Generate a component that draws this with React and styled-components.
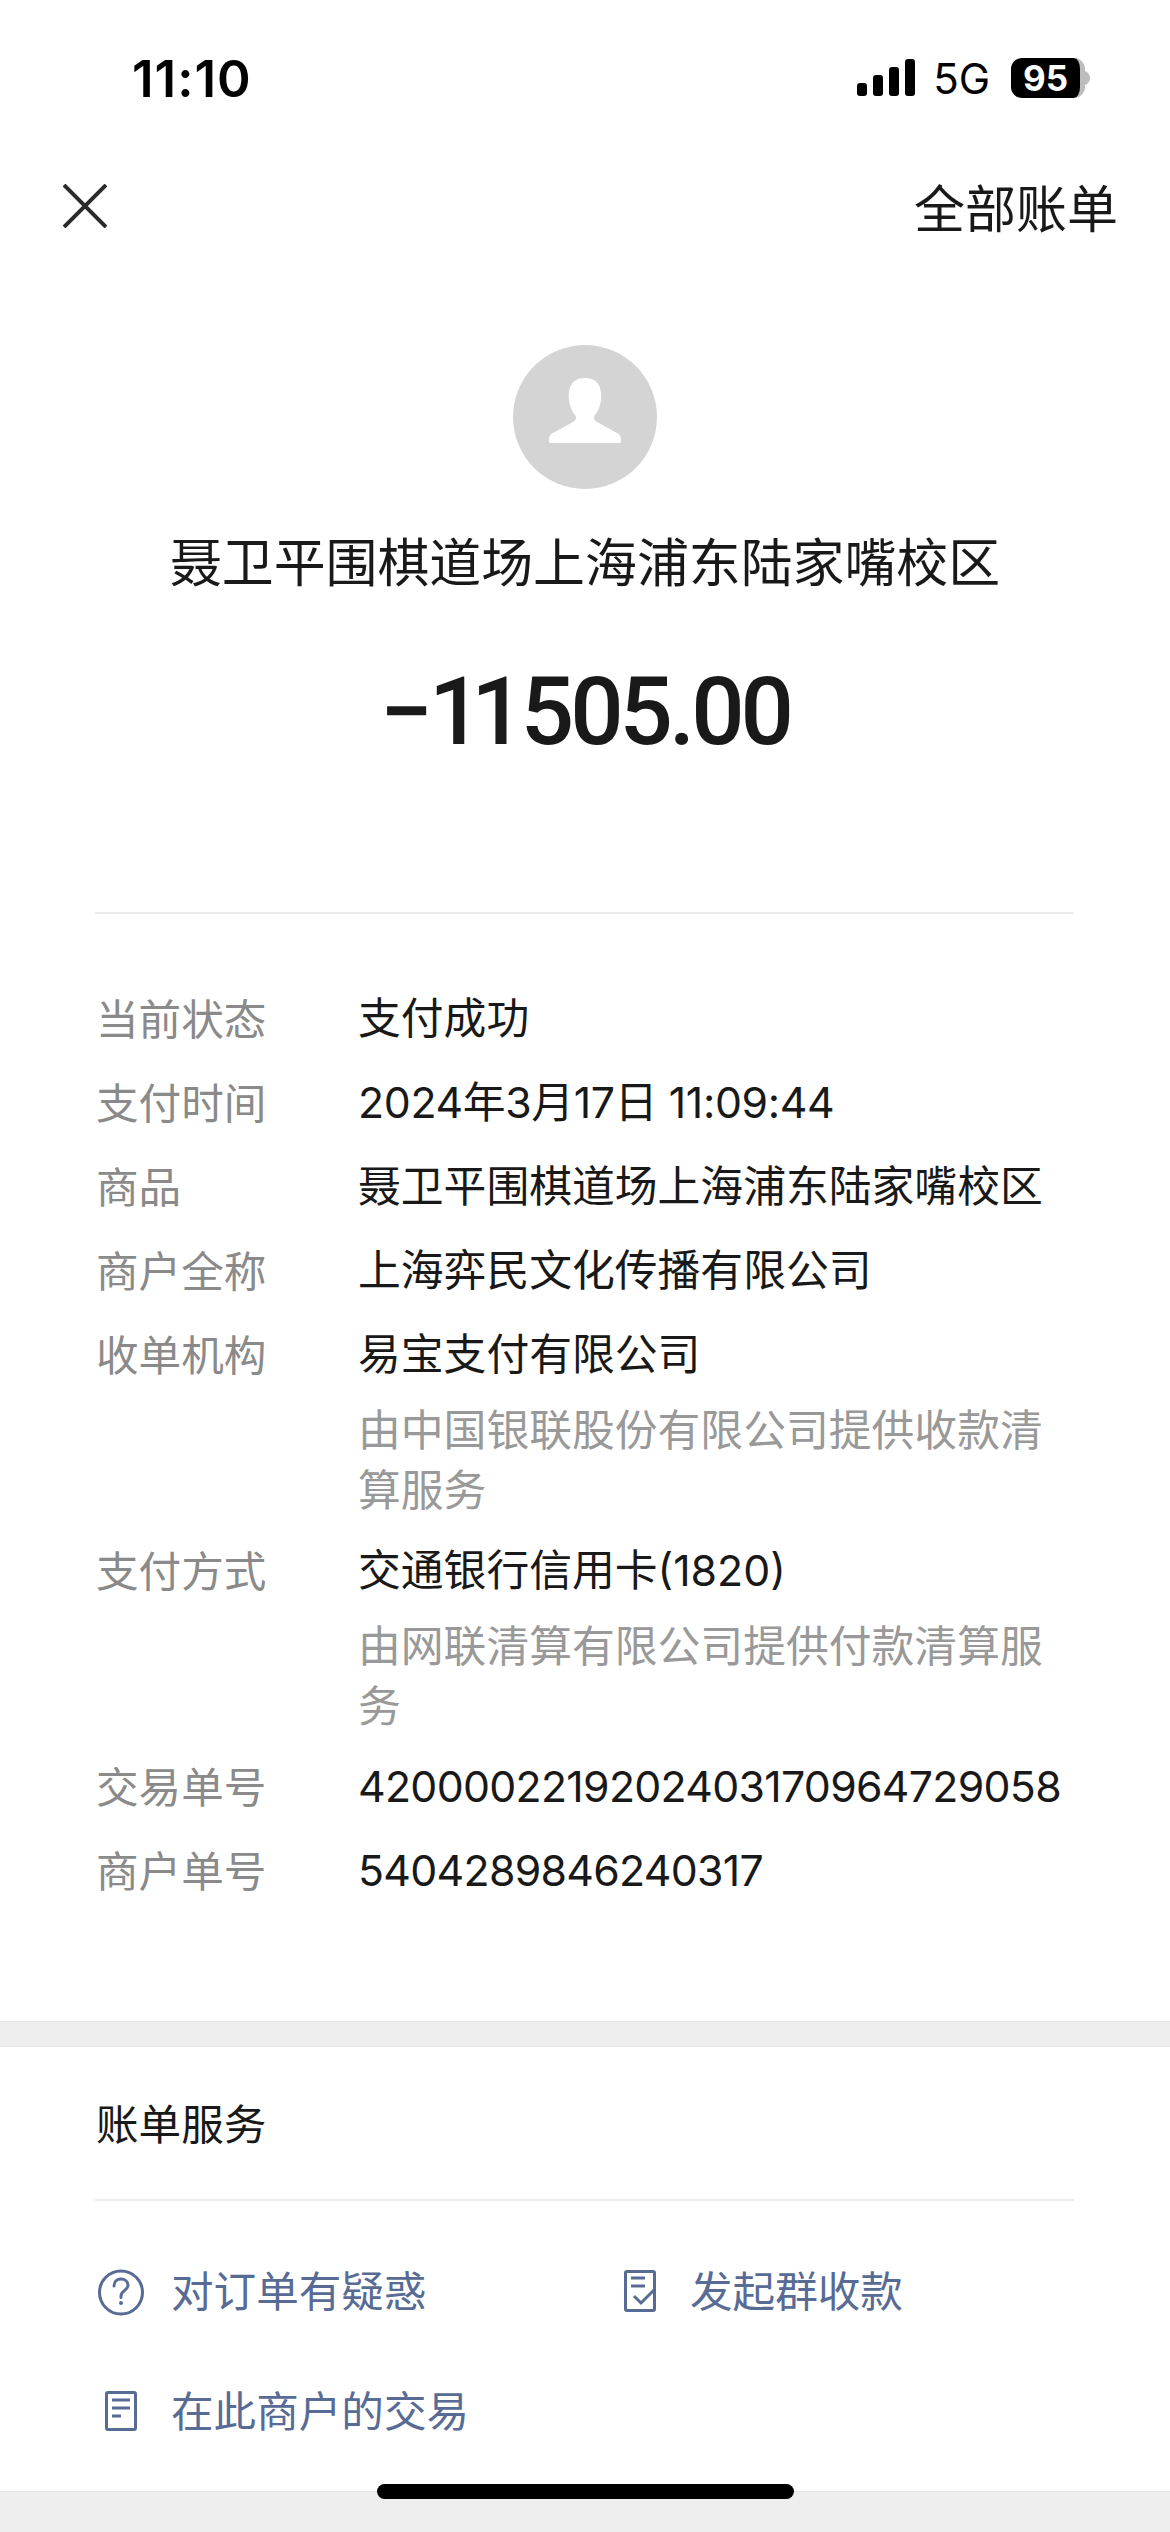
import React from "react";
import styled, { createGlobalStyle } from "styled-components";

const GlobalStyle = createGlobalStyle`
  html, body {
    margin: 0;
    padding: 0;
    background: #ffffff;
  }
`;

const Page = styled.div`
  position: relative;
  width: 1170px;
  height: 2532px;
  overflow: hidden;
  display: flex;
  flex-direction: column;
  background: #ffffff;
  font-family: "Noto Sans CJK SC", "Liberation Sans", sans-serif;
  color: #191919;
`;

const StatusBar = styled.div`
  height: 156px;
  flex: none;
  display: flex;
  align-items: center;
  justify-content: space-between;
  padding: 0 80px 0 132px;
`;

const Clock = styled.span`
  font-family: Inter, "Liberation Sans", sans-serif;
  font-size: 51px;
  font-weight: 600;
  letter-spacing: 1px;
  color: #000000;
`;

const StatusIcons = styled.div`
  display: flex;
  align-items: center;
`;

const Network = styled.span`
  font-family: Inter, "Liberation Sans", sans-serif;
  font-size: 42px;
  font-weight: 400;
  margin: 0 21px 0 18px;
  color: #000000;
`;

const Battery = styled.div`
  width: 74px;
  height: 40px;
  background: #000000;
  border-radius: 11px;
  border-right: 5px solid #bdbdbd;
  box-sizing: border-box;
  display: flex;
  align-items: center;
  justify-content: center;
  color: #ffffff;
  font-family: Inter, "Liberation Sans", sans-serif;
  font-size: 35px;
  font-weight: 700;
`;

const NavBar = styled.div`
  height: 100px;
  flex: none;
  display: flex;
  align-items: center;
  justify-content: space-between;
  padding: 0 52px 0 63px;
`;

const NavLink = styled.span`
  font-size: 51px;
  line-height: 60px;
  color: #191919;
`;

const Hero = styled.div`
  display: flex;
  flex-direction: column;
  align-items: center;
  flex: none;
  padding: 89px 0 145px;
`;

const MerchantName = styled.div`
  margin-top: 40px;
  font-size: 51.9px;
  line-height: 62px;
  color: #191919;
`;

const Amount = styled.div`
  margin-top: 66px;
  font-family: Roboto, "Liberation Sans", sans-serif;
  font-size: 94px;
  line-height: 110px;
  font-weight: 500;
  letter-spacing: -4px;
  color: #191919;
`;

// the reference's numeral 1 is much narrower than Roboto's tabular one
const Ones = styled.span`
  letter-spacing: -11px;
  margin-right: 7px;
`;

const Divider = styled.div`
  height: 2px;
  flex: none;
  margin: 0 96px 0 95px;
  background: #ececec;
`;

const Details = styled.div`
  flex: none;
  display: flex;
  flex-direction: column;
  padding: 73px 0 98px 96px;
`;

const Row = styled.div`
  display: grid;
  grid-template-columns: 262px 1fr;
  padding-bottom: 22px;
`;

const Label = styled.div`
  font-size: 42.6px;
  line-height: 60px;
  color: #8a8a8a;
`;

const Value = styled.div`
  padding-top: 2px;
  font-family: Inter, "Noto Sans CJK SC", sans-serif;
  font-size: 42.8px;
  line-height: 60px;
  letter-spacing: ${(props) => props.$tracking || "0"};
  color: #191919;
  white-space: nowrap;
`;

const Note = styled.div`
  width: 690px;
  margin-top: 12px;
  font-size: 42.8px;
  line-height: 60px;
  color: #999999;
`;

const GrayBand = styled.div`
  height: 24px;
  flex: none;
  background: #eeeeee;
  border-top: 1px solid #e5e5e5;
  border-bottom: 1px solid #e5e5e5;
`;

const Services = styled.div`
  flex: 1;
  display: flex;
  flex-direction: column;
`;

const ServicesTitle = styled.div`
  height: 148px;
  flex: none;
  padding: 0 0 4px 96px;
  display: flex;
  align-items: center;
  font-size: 42.6px;
  color: #191919;
`;

const Actions = styled.div`
  display: grid;
  grid-template-columns: 519px 1fr;
  grid-auto-rows: 120px;
  padding: 27px 0 0 97px;
`;

const Action = styled.div`
  display: flex;
  align-items: center;
  gap: 26px;
  font-size: 42.6px;
  color: #576b95;
`;

const ActionIcon = styled.svg`
  width: 48px;
  height: 60px;
  flex: none;
`;

const FooterBand = styled.div`
  height: 40px;
  flex: none;
  background: #eeeeee;
  border-top: 1px solid #e5e5e5;
`;

const HomeIndicator = styled.div`
  position: absolute;
  left: 377px;
  bottom: 33px;
  width: 417px;
  height: 15px;
  border-radius: 8px;
  background: #000000;
`;

const rows = [
  { label: "当前状态", value: "支付成功" },
  { label: "支付时间", value: "2024年3月17日 11:09:44", tracking: "-0.35px" },
  { label: "商品", value: "聂卫平围棋道场上海浦东陆家嘴校区" },
  { label: "商户全称", value: "上海弈民文化传播有限公司" },
  { label: "收单机构", value: "易宝支付有限公司", note: "由中国银联股份有限公司提供收款清算服务" },
  { label: "支付方式", value: "交通银行信用卡(1820)", note: "由网联清算有限公司提供付款清算服务" },
  { label: "交易单号", value: "4200002219202403170964729058", tracking: "-0.7px" },
  { label: "商户单号", value: "5404289846240317", tracking: "-0.7px" },
];

const SignalIcon = () => (
  <svg width="58" height="38" viewBox="0 0 58 38" fill="#000">
    <rect x="0" y="24" width="10" height="13" rx="3" />
    <rect x="16" y="16" width="10" height="21" rx="3" />
    <rect x="32" y="8" width="10" height="29" rx="3" />
    <rect x="48" y="0" width="10" height="37" rx="3" />
  </svg>
);

const BatteryNub = () => (
  <svg width="5" height="14" viewBox="0 0 5 14" fill="#bdbdbd">
    <path d="M0 0c3 1 5 4 5 7s-2 6-5 7z" />
  </svg>
);

const CloseIcon = () => (
  <svg width="44" height="44" viewBox="0 0 44 44" fill="none" stroke="#2b2b2b" strokeWidth="4">
    <path d="M1 1l42 42M43 1L1 43" />
  </svg>
);

const Avatar = () => (
  <svg width="144" height="144" viewBox="0 0 144 144">
    <circle cx="72" cy="72" r="72" fill="#d4d4d4" />
    <path
      d="M72 33c-14 0-17 11-16 21 .5 7 3 12 6 16 2 3 1 5-2 7l-20 11c-4 2-4 5-4 8 0 2 1 2 3 2h66c2 0 3 0 3-2 0-3 0-6-4-8L84 77c-3-2-4-4-2-7 3-4 5.500-9 6-16 1-10-2-21-16-21z"
      fill="#ffffff"
    />
  </svg>
);

const HelpIcon = () => (
  <ActionIcon viewBox="0 0 48 60" fill="none" stroke="#576b95" strokeWidth="3">
    <circle cx="24" cy="34.500" r="21.500" />
    <path d="M17 28c0-4.200 3-7 7-7s7 2.700 7 6.300c0 5-7 5.200-7 10.700v1.500" strokeLinecap="round" />
    <circle cx="24" cy="45" r="2" fill="#576b95" stroke="none" />
  </ActionIcon>
);

const CheckDocIcon = () => (
  <ActionIcon viewBox="0 0 48 60" fill="none" stroke="#576b95" strokeWidth="3">
    <rect x="9.500" y="13.500" width="29" height="39" rx="1.500" />
    <path d="M15 20h14M15 28h14" />
    <path d="M18 38l7 7 13-13" />
  </ActionIcon>
);

const DocIcon = () => (
  <ActionIcon viewBox="0 0 48 60" fill="none" stroke="#576b95" strokeWidth="3">
    <rect x="9.500" y="14.500" width="29" height="37" rx="1.500" />
    <path d="M15 22h18M15 30h18M15 38h9" />
  </ActionIcon>
);

export default function App() {
  return (
    <Page>
      <GlobalStyle />
      <StatusBar>
        <Clock>11:10</Clock>
        <StatusIcons>
          <SignalIcon />
          <Network>5G</Network>
          <Battery>95</Battery>
          <BatteryNub />
        </StatusIcons>
      </StatusBar>
      <NavBar>
        <CloseIcon />
        <NavLink>全部账单</NavLink>
      </NavBar>
      <Hero>
        <Avatar />
        <MerchantName>聂卫平围棋道场上海浦东陆家嘴校区</MerchantName>
        <Amount>−<Ones>11</Ones>505.00</Amount>
      </Hero>
      <Divider />
      <Details>
        {rows.map((row) => (
          <Row key={row.label}>
            <Label>{row.label}</Label>
            <div>
              <Value $tracking={row.tracking}>{row.value}</Value>
              {row.note && <Note>{row.note}</Note>}
            </div>
          </Row>
        ))}
      </Details>
      <GrayBand />
      <Services>
        <ServicesTitle>账单服务</ServicesTitle>
        <Divider />
        <Actions>
          <Action>
            <HelpIcon />
            对订单有疑惑
          </Action>
          <Action>
            <CheckDocIcon />
            发起群收款
          </Action>
          <Action>
            <DocIcon />
            在此商户的交易
          </Action>
        </Actions>
      </Services>
      <FooterBand />
      <HomeIndicator />
    </Page>
  );
}
